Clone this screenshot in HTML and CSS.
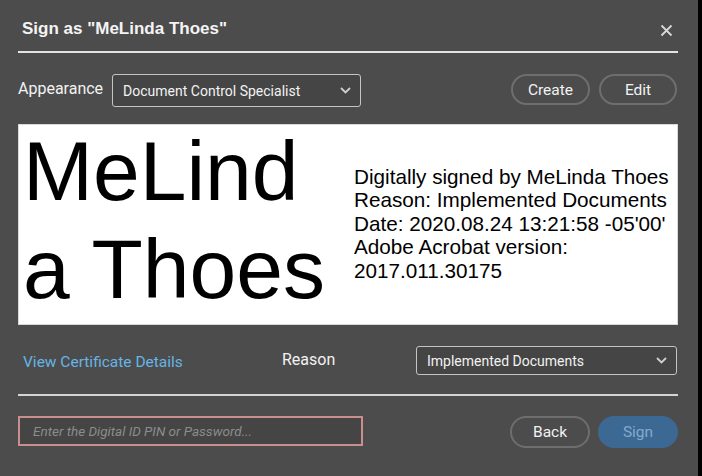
FILE: index.html
```html
<!DOCTYPE html>
<html>
<head>
<meta charset="utf-8">
<link rel="stylesheet" href="styles.css">
</head>
<body>
<div class="dialog">
  <div class="header">
    <div class="title">Sign as "MeLinda Thoes"</div>
    <svg class="close" width="13" height="13" viewBox="0 0 13 13"><path d="M1.5 1.5 L11.5 11.5 M11.5 1.5 L1.5 11.5" stroke="#d8d8d8" stroke-width="1.8" fill="none"/></svg>
  </div>
  <div class="row row-appearance">
    <span class="label">Appearance</span>
    <div class="select select-appearance">
      <span>Document Control Specialist</span>
      <svg class="chev" width="11" height="7" viewBox="0 0 11 7"><path d="M1 1 L5.5 5.5 L10 1" stroke="#cfcfcf" stroke-width="1.8" fill="none"/></svg>
    </div>
    <div class="spacer"></div>
    <button class="pill">Create</button>
    <button class="pill pill-edit">Edit</button>
  </div>
  <div class="preview">
    <div class="sig-name">MeLinda Thoes</div>
    <div class="sig-info">Digitally signed by MeLinda Thoes<br>Reason: Implemented Documents<br>Date: 2020.08.24 13:21:58 -05'00'<br>Adobe Acrobat version:<br>2017.011.30175</div>
  </div>
  <div class="row row-reason">
    <a class="link">View Certificate Details</a>
    <span class="label reason-label">Reason</span>
    <div class="select select-reason">
      <span>Implemented Documents</span>
      <svg class="chev" width="11" height="7" viewBox="0 0 11 7"><path d="M1 1 L5.5 5.5 L10 1" stroke="#cfcfcf" stroke-width="1.8" fill="none"/></svg>
    </div>
  </div>
  <div class="divider"></div>
  <div class="row row-sign">
    <div class="pin">Enter the Digital ID PIN or Password...</div>
    <div class="spacer"></div>
    <button class="pill">Back</button>
    <button class="pill pill-sign">Sign</button>
  </div>
</div>
</body>
</html>
```
FILE: styles.css
```css
html, body {
  margin: 0;
  padding: 0;
  background: #000;
}
body {
  width: 702px;
  height: 476px;
  overflow: hidden;
  font-family: Roboto, "Liberation Sans", sans-serif;
}
.dialog {
  width: 698px;
  height: 476px;
  background: #4c4c4c;
  box-sizing: border-box;
  padding: 0 20px 0 18px;
  display: flex;
  flex-direction: column;
}
.header {
  height: 51px;
  border-bottom: 2px solid #e4e4e4;
  display: flex;
  align-items: center;
  justify-content: space-between;
  padding: 0 4px 0 4px;
  box-sizing: content-box;
}
.title {
  font-family: "Liberation Sans", Arial, sans-serif;
  font-weight: bold;
  font-size: 17px;
  color: #f4f4f4;
  margin-top: 7px;
}
.close {
  margin-top: 10px;
  margin-right: 1px;
}
.row {
  display: flex;
  align-items: center;
}
.row-appearance {
  margin-top: 21px;
  height: 33px;
  padding-right: 1px;
}
.label {
  color: #f2f2f2;
  font-size: 16px;
}
.row-appearance .label {
  margin-right: 9px;
  margin-top: -4px;
}
.select {
  box-sizing: border-box;
  border: 1px solid #c4c4c4;
  border-radius: 3px;
  background: #454545;
  display: flex;
  align-items: center;
  justify-content: space-between;
  color: #f2f2f2;
  font-size: 14px;
  padding: 0 9px 0 10px;
}
.select-appearance {
  width: 249px;
  height: 33px;
}
.chev {
  display: block;
}
.spacer {
  flex: 1;
}
.pill {
  box-sizing: border-box;
  height: 31px;
  width: 79px;
  border: 2px solid #6e6e6e;
  border-radius: 16px;
  background: transparent;
  color: #f2f2f2;
  font-family: Roboto, "Liberation Sans", sans-serif;
  font-size: 15.5px;
  padding: 0;
}
.row-appearance .pill {
  margin-top: -2px;
}
.pill-edit {
  margin-left: 9px;
  width: 78px;
}
.preview {
  margin-top: 17px;
  height: 201px;
  background: #fff;
  border: 1px solid #d8d8d8;
  box-sizing: border-box;
  display: flex;
  color: #000;
  font-family: "Liberation Sans", Arial, sans-serif;
}
.sig-name {
  width: 312px;
  font-size: 84px;
  line-height: 98px;
  word-break: break-all;
  padding-left: 4px;
  margin-top: -3px;
}
.sig-info {
  margin-left: 19px;
  margin-top: 40px;
  font-size: 20.7px;
  line-height: 23.4px;
}
.row-reason {
  margin-top: 21px;
  height: 29px;
}
.link {
  color: #66b5e6;
  font-size: 15.5px;
  width: 259px;
  padding-left: 5px;
  margin-top: 2px;
}
.reason-label {
  width: 134px;
  margin-top: -3px;
}
.select-reason {
  width: 261px;
  height: 29px;
}
.divider {
  margin-top: 19px;
  height: 2px;
  background: #d4d4d4;
}
.row-sign {
  margin-top: 20px;
  height: 32px;
}
.pin {
  box-sizing: border-box;
  width: 345px;
  height: 30px;
  border: 2px solid #c98e8e;
  background: #454545;
  color: #8c8c8c;
  font-style: italic;
  font-size: 13.5px;
  padding-left: 13px;
  display: flex;
  align-items: center;
  margin-top: -2px;
}
.row-sign .pill {
  height: 32px;
  width: 80px;
}
.pill-sign {
  margin-left: 8px;
  background: #3c6894;
  border-color: #3c6894;
  color: #86a8c9;
}
```
